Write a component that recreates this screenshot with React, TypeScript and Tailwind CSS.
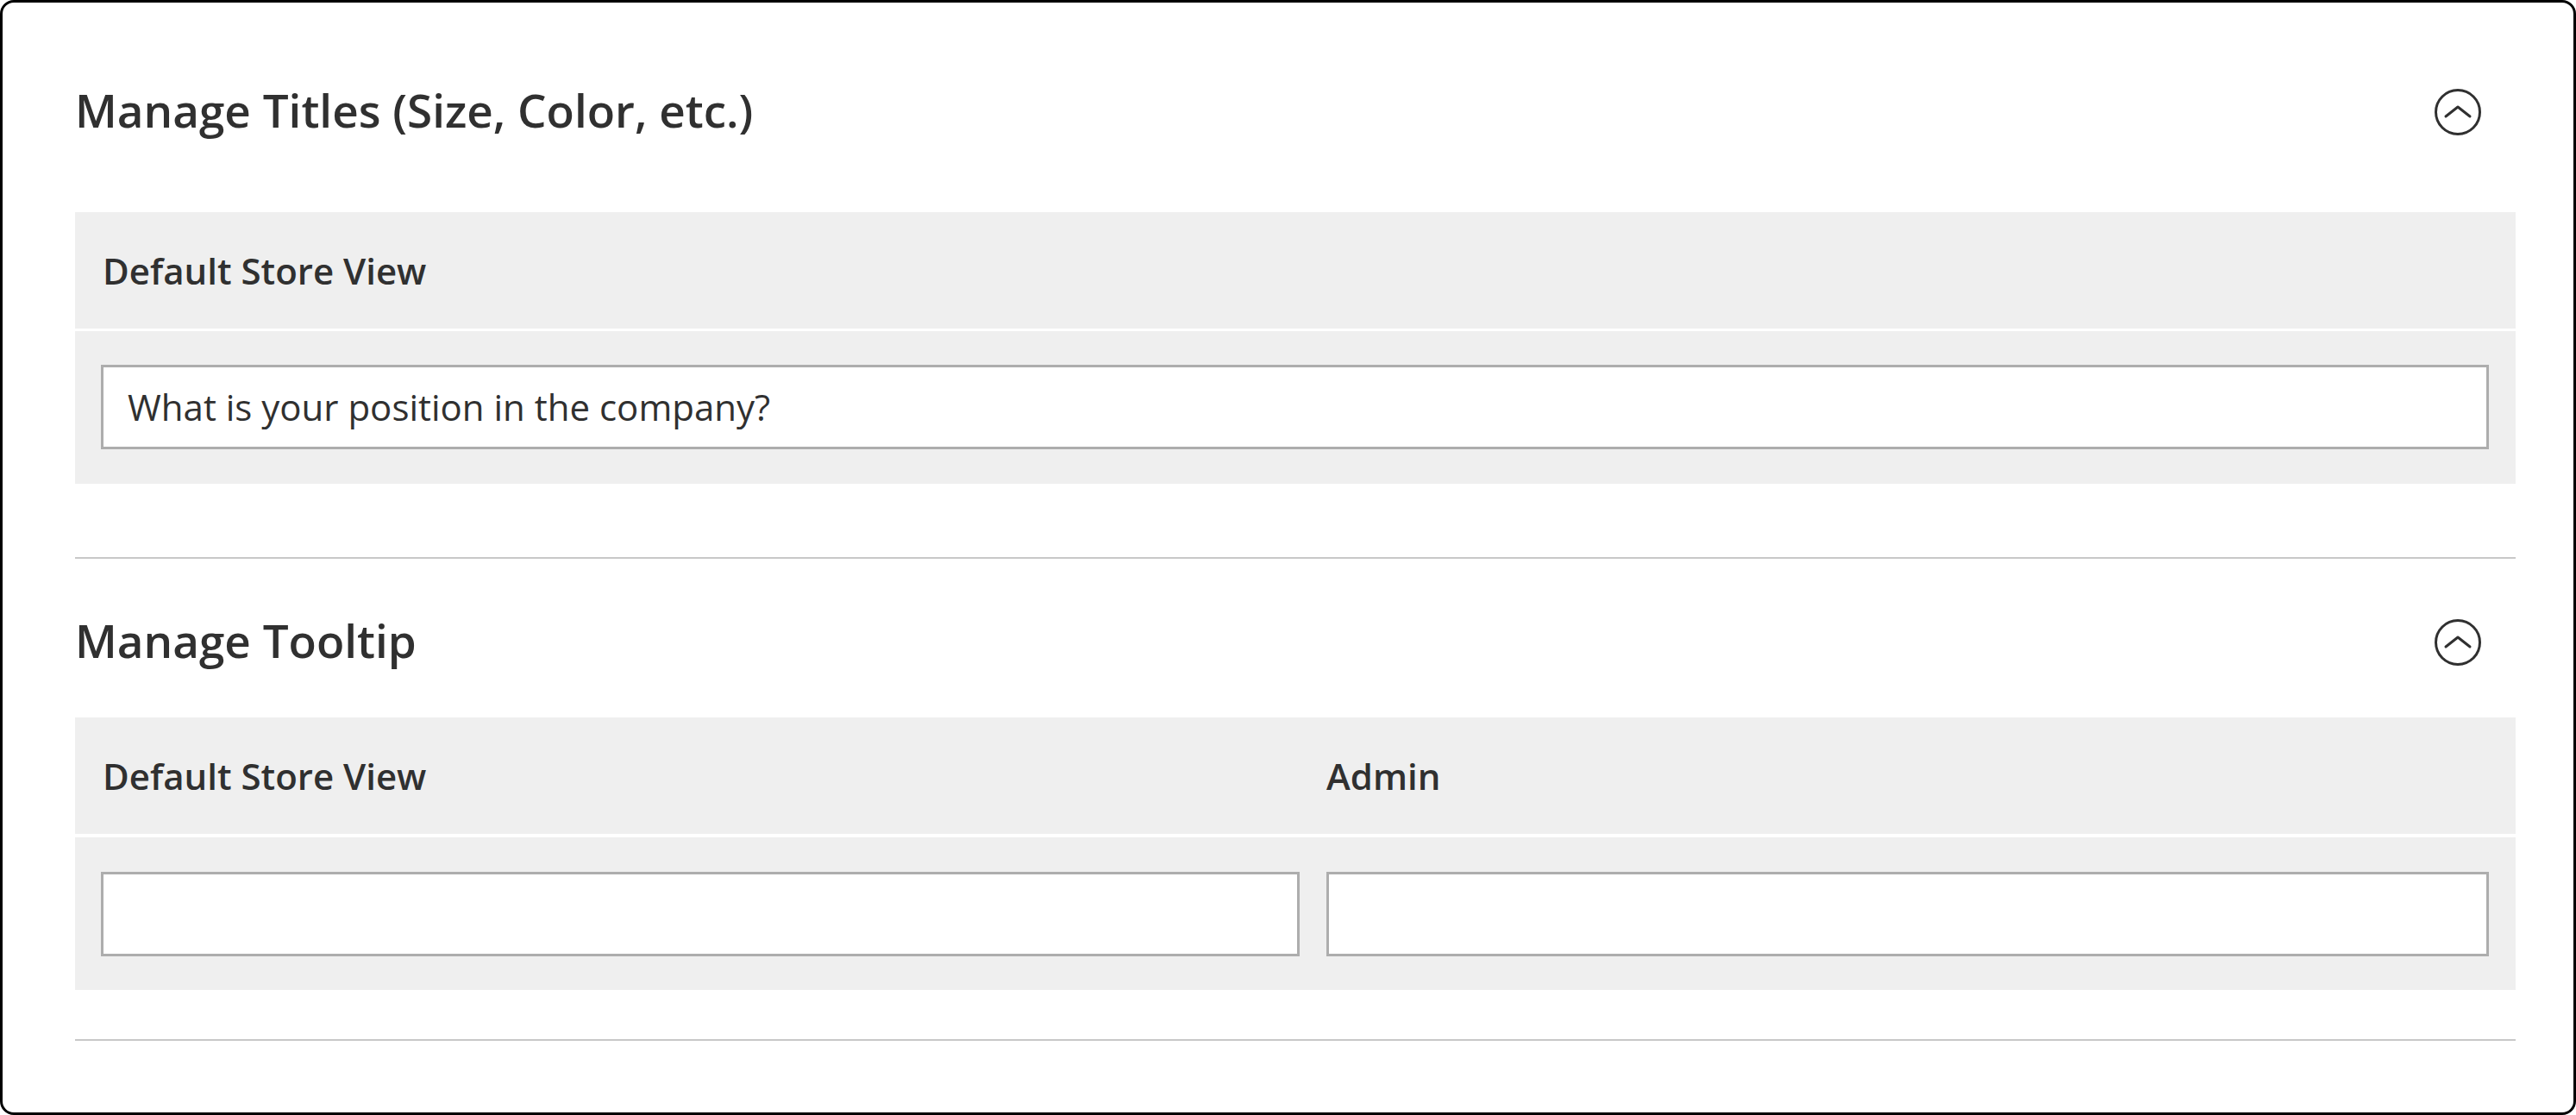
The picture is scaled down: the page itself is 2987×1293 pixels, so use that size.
const font = { fontFamily: '"Open Sans", "Noto Sans", sans-serif' };

function CollapseIcon({ className = '' }: { className?: string }) {
  return (
    <svg width="54" height="54" viewBox="0 0 54 54" fill="none" className={className}>
      <circle cx="27" cy="27" r="25.5" stroke="#303030" strokeWidth="3" />
      <path d="M13 32 L27 21 L41 32" stroke="#303030" strokeWidth="3" strokeLinecap="round" strokeLinejoin="round" />
    </svg>
  );
}

function SectionTitle({ title, className = '' }: { title: string; className?: string }) {
  return (
    <div className={`flex h-[100px] items-center justify-between ${className}`}>
      <h2 className="text-[53px] leading-none font-semibold text-[#303030]">{title}</h2>
      <CollapseIcon className="mt-[5px] mr-[40px]" />
    </div>
  );
}

function TextInput({ value = '' }: { value?: string }) {
  return (
    <div className="flex h-[98px] items-center border-[3px] border-[#adadad] bg-white pl-[28px] text-[42px] leading-none text-[#303030]">
      {value}
    </div>
  );
}

export default function App() {
  return (
    <div
      style={font}
      className="h-[1293px] w-[2987px] overflow-hidden rounded-[16px] border-[3px] border-black bg-white pr-[67px] pl-[84px]"
    >
      <SectionTitle title="Manage Titles (Size, Color, etc.)" className="mt-[74px]" />

      <div className="mt-[69px]">
        <div className="flex h-[135px] items-center bg-[#efefef] pl-[32px] text-[42px] leading-none font-semibold text-[#303030]">
          Default Store View
        </div>
        <div className="mt-[3px] h-[177px] bg-[#efefef] pt-[39px] pr-[31px] pl-[30px]">
          <TextInput value="What is your position in the company?" />
        </div>
      </div>

      <div className="mt-[85px] h-[2px] bg-[#c8c8c8]" />

      <SectionTitle title="Manage Tooltip" className="mt-[44px]" />

      <div className="mt-[40px]">
        <div className="grid h-[135px] grid-cols-[1435px_1fr] items-center bg-[#efefef] text-[42px] leading-none font-semibold text-[#303030]">
          <div className="pl-[32px]">Default Store View</div>
          <div className="pl-[16px]">Admin</div>
        </div>
        <div className="mt-[4px] grid h-[177px] grid-cols-[1435px_1fr] bg-[#efefef] pt-[40px]">
          <div className="pr-[15px] pl-[30px]">
            <TextInput />
          </div>
          <div className="pr-[31px] pl-[16px]">
            <TextInput />
          </div>
        </div>
      </div>

      <div className="mt-[57px] h-[2px] bg-[#c8c8c8]" />
    </div>
  );
}
